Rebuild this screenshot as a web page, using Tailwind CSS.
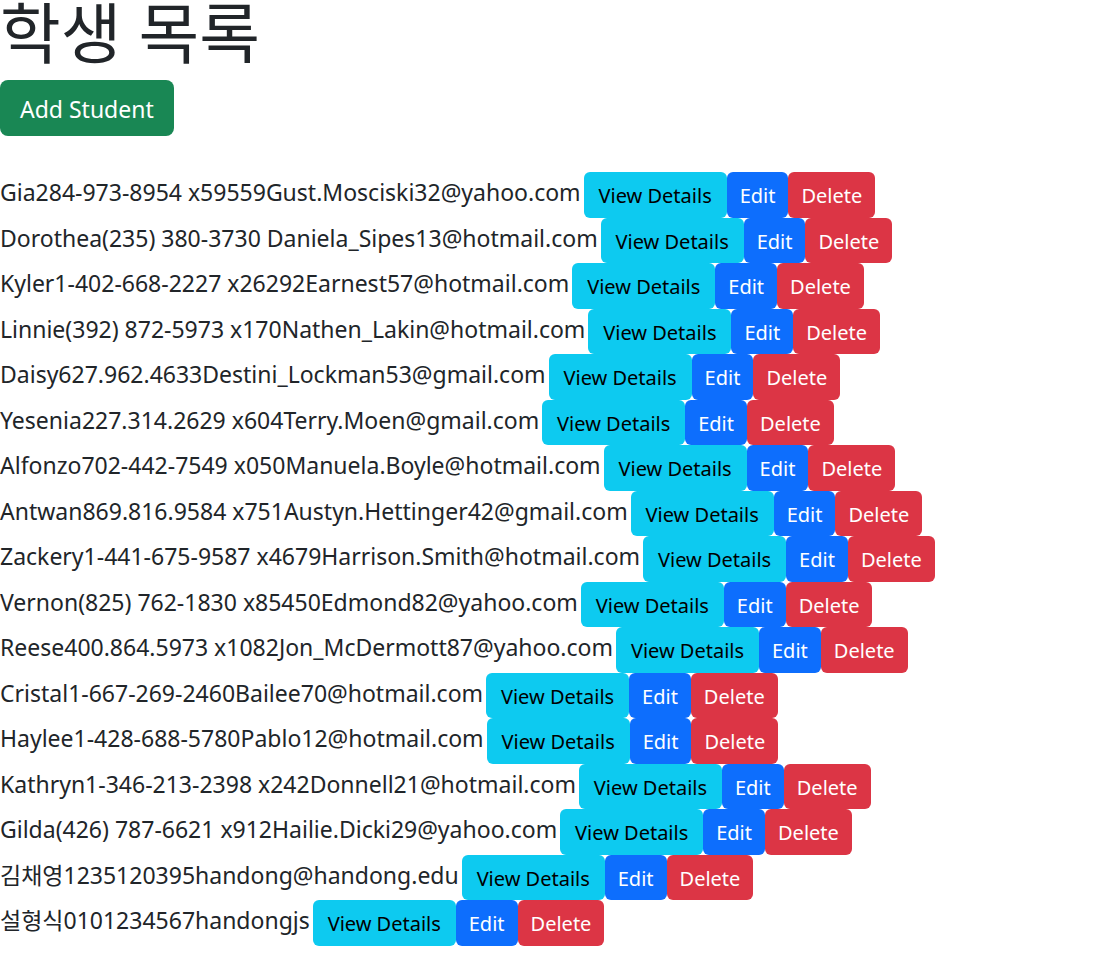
<!DOCTYPE html>
<html lang="ko">
<head>
<meta charset="utf-8">
<title>학생 목록</title>
<script src="https://cdn.jsdelivr.net/npm/@tailwindcss/browser@4"></script>
</head>
<body class="bg-white font-['Noto_Sans','Noto_Sans_CJK_KR',sans-serif] text-[23px] leading-9 text-[#212529]">
<h1 class="mb-4 text-[66px] leading-16 font-normal">학생 목록</h1>
<a href="#add" class="inline-flex h-14 items-center rounded-lg bg-[#198754] px-5 pt-0.5 text-white">Add Student</a>
<ul id="students" class="mt-9"></ul>
<template id="row">
<li class="flex items-stretch whitespace-nowrap odd:h-[46px] even:h-[45px]">
<span class="pt-0.5 pr-[3px]"></span>
<a href="#details" class="flex min-w-[143px] items-center justify-center rounded-md bg-[#0dcaf0] px-3 pt-0.5 text-[20px] text-black">View Details</a>
<a href="#edit" class="flex items-center rounded-md bg-[#0d6efd] px-[13px] pt-0.5 text-[20px] text-white">Edit</a>
<button type="button" class="flex items-center rounded-md bg-[#dc3545] px-[13px] pt-0.5 text-[20px] text-white">Delete</button>
</li>
</template>
<script>
const students = [
"Gia284-973-8954 x59559Gust.Mosciski32@yahoo.com",
"Dorothea(235) 380-3730 Daniela_Sipes13@hotmail.com",
"Kyler1-402-668-2227 x26292Earnest57@hotmail.com",
"Linnie(392) 872-5973 x170Nathen_Lakin@hotmail.com",
"Daisy627.962.4633Destini_Lockman53@gmail.com",
"Yesenia227.314.2629 x604Terry.Moen@gmail.com",
"Alfonzo702-442-7549 x050Manuela.Boyle@hotmail.com",
"Antwan869.816.9584 x751Austyn.Hettinger42@gmail.com",
"Zackery1-441-675-9587 x4679Harrison.Smith@hotmail.com",
"Vernon(825) 762-1830 x85450Edmond82@yahoo.com",
"Reese400.864.5973 x1082Jon_McDermott87@yahoo.com",
"Cristal1-667-269-2460Bailee70@hotmail.com",
"Haylee1-428-688-5780Pablo12@hotmail.com",
"Kathryn1-346-213-2398 x242Donnell21@hotmail.com",
"Gilda(426) 787-6621 x912Hailie.Dicki29@yahoo.com",
"김채영1235120395handong@handong.edu",
"설형식0101234567handongjs"
];
for (const s of students) {
const row = document.getElementById("row").content.cloneNode(true);
row.querySelector("span").textContent = s;
document.getElementById("students").append(row);
}
</script>
</body>
</html>
